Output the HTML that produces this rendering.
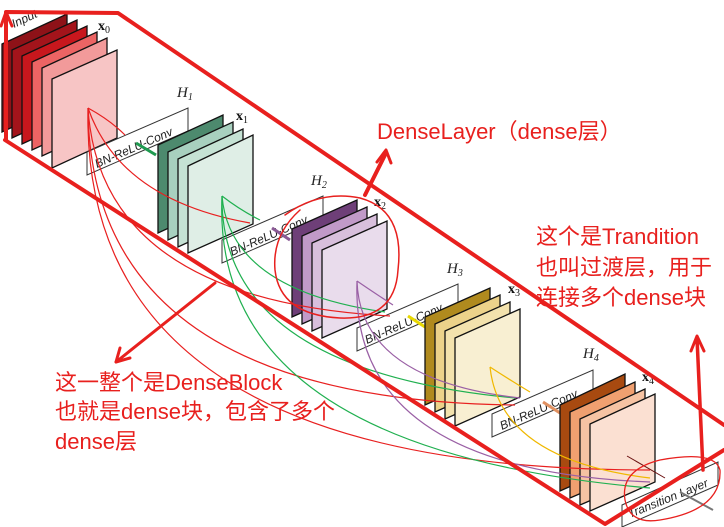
<!DOCTYPE html>
<html><head><meta charset="utf-8"><style>
html,body{margin:0;padding:0;background:#fff;}
svg{display:block;}
.bn{font-family:"Liberation Sans",sans-serif;font-style:italic;font-size:12px;fill:#222;}
.h{font-family:"Liberation Serif",serif;font-style:italic;font-size:15px;fill:#222;}
.x{font-family:"Liberation Serif",serif;font-weight:bold;font-size:14px;fill:#111;}
.cn{font-family:"Liberation Sans","Noto Sans CJK SC",sans-serif;font-size:22px;fill:#e8201e;}
</style></head><body>
<svg width="724" height="527" viewBox="0 0 724 527" xmlns="http://www.w3.org/2000/svg">
<defs>
<g id="box"><polygon points="0,24 101,-20 101,3 0,47" fill="#fff" stroke="#333" stroke-width="1"/></g>
</defs>

<g stroke="#111" stroke-width="1.3">
<polygon points="2,44 67,14 67,102 2,132" fill="#8e1218"/>
<polygon points="12,50 77,20 77,108 12,138" fill="#a3141b"/>
<polygon points="22,56 87,26 87,114 22,144" fill="#c8171d"/>
<polygon points="32,62 97,32 97,120 32,150" fill="#ec6464"/>
<polygon points="42,68 107,38 107,126 42,156" fill="#f29a9a"/>
<polygon points="52,79 117,50 117,138 52,168" fill="#f7c5c5"/>
</g>
<text x="14" y="28" class="bn" transform="rotate(-25 14 28)">Input</text>
<text x="98" y="30" class="x">x<tspan font-size="10" dy="3" font-weight="normal">0</tspan></text>

<g transform="translate(87,128)"><use href="#box"/></g>
<text x="97" y="168" class="bn" transform="rotate(-23.5 97 168)">BN-ReLU-Conv</text>
<text x="177" y="97" class="h">H<tspan font-size="10" dy="3">1</tspan></text>
<line x1="136" y1="143" x2="156" y2="155" stroke="#1f9a50" stroke-width="3"/>

<g stroke="#111" stroke-width="1.3">
<polygon points="158,145 223,115 223,203 158,233" fill="#4d8a6e"/>
<polygon points="168,152 233,122 233,210 168,240" fill="#a8d0bf"/>
<polygon points="178,159 243,129 243,217 178,247" fill="#c5e2d4"/>
<polygon points="188,166 253,135 253,224 188,253" fill="#dfeee6"/>
</g>
<text x="236" y="120" class="x">x<tspan font-size="10" dy="3" font-weight="normal">1</tspan></text>

<g transform="translate(222,216)"><use href="#box"/></g>
<text x="232" y="256" class="bn" transform="rotate(-23.5 232 256)">BN-ReLU-Conv</text>
<text x="311" y="185" class="h">H<tspan font-size="10" dy="3">2</tspan></text>
<line x1="272" y1="228" x2="290" y2="240" stroke="#8a5a95" stroke-width="3"/>

<g stroke="#111" stroke-width="1.3">
<polygon points="292,229 357,200 357,288 292,317" fill="#6e3f78"/>
<polygon points="302,236 367,207 367,295 302,324" fill="#c19ac8"/>
<polygon points="312,243 377,214 377,302 312,331" fill="#d8bfdc"/>
<polygon points="322,250 387,221 387,309 322,338" fill="#e9dcec"/>
</g>
<text x="374" y="206" class="x">x<tspan font-size="10" dy="3" font-weight="normal">2</tspan></text>

<g transform="translate(357,304)"><use href="#box"/></g>
<text x="367" y="344" class="bn" transform="rotate(-23.5 367 344)">BN-ReLU-Conv</text>
<text x="447" y="273" class="h">H<tspan font-size="10" dy="3">3</tspan></text>
<line x1="408" y1="316" x2="425" y2="327" stroke="#e8d800" stroke-width="3"/>

<g stroke="#111" stroke-width="1.3">
<polygon points="425,317 490,288 490,376 425,405" fill="#b08a1e"/>
<polygon points="435,324 500,295 500,383 435,412" fill="#ecd28a"/>
<polygon points="445,331 510,302 510,390 445,419" fill="#f3e2ad"/>
<polygon points="455,338 520,309 520,397 455,426" fill="#f8efd2"/>
</g>
<text x="508" y="293" class="x">x<tspan font-size="10" dy="3" font-weight="normal">3</tspan></text>

<g transform="translate(492,390)"><use href="#box"/></g>
<text x="502" y="430" class="bn" transform="rotate(-23.5 502 430)">BN-ReLU-Conv</text>
<text x="583" y="358" class="h">H<tspan font-size="10" dy="3">4</tspan></text>
<line x1="543" y1="402" x2="560" y2="413" stroke="#e09060" stroke-width="3"/>

<g stroke="#111" stroke-width="1.3">
<polygon points="560,405 625,374 625,462 560,491 " fill="#a84a10"/>
<polygon points="570,412 635,382 635,470 570,498" fill="#f0a070"/>
<polygon points="580,419 645,389 645,477 580,505" fill="#f6c3a3"/>
<polygon points="590,424 655,394 655,482 590,511" fill="#fbe0d2"/>
</g>
<text x="642" y="381" class="x">x<tspan font-size="10" dy="3" font-weight="normal">4</tspan></text>
<line x1="627" y1="456" x2="665" y2="478" stroke="#6a1010" stroke-width="1"/>

<g fill="none" stroke-width="1.2">
<path d="M88,108 Q110,120 125,135" stroke="#e82020"/>
<path d="M88,108 Q120,200 250,223" stroke="#e82020"/>
<path d="M88,108 Q100,300 390,316" stroke="#e82020"/>
<path d="M88,108 Q90,400 515,405" stroke="#e82020"/>
<path d="M88,108 Q80,470 650,470" stroke="#e82020"/>
<path d="M222,196 Q240,210 260,220" stroke="#20b050"/>
<path d="M222,196 Q230,290 385,312" stroke="#20b050"/>
<path d="M222,196 Q220,370 515,398" stroke="#20b050"/>
<path d="M222,196 Q210,450 650,488" stroke="#20b050"/>
<path d="M357,281 Q370,290 393,305" stroke="#9a60a5"/>
<path d="M357,281 Q360,380 520,398" stroke="#9a60a5"/>
<path d="M357,281 Q350,470 650,482" stroke="#9a60a5"/>
<path d="M490,367 Q510,380 530,392" stroke="#f0b800"/>
<path d="M490,367 Q500,460 650,478" stroke="#f0b800"/>
</g>

<polygon points="622,505 718,462 718,485 622,527" fill="#fff" stroke="#333"/>
<text x="630" y="518" class="bn" transform="rotate(-22 630 518)">Transition Layer</text>
<line x1="680" y1="492" x2="713" y2="510" stroke="#777" stroke-width="2"/>

<g fill="none" stroke="#e8201e" stroke-linecap="round" stroke-linejoin="round">
<polyline points="6,140 6,12 118,13 724,425" stroke-width="4"/>
<polyline points="5,140 605,524 724,450" stroke-width="4"/>
<path d="M6,12 L1,26 M6,12 L12,26" stroke-width="3"/>
<path d="M285,215 Q320,190 360,198 Q405,210 398,270 Q395,320 340,318 Q280,315 275,270 Q272,235 300,210" stroke-width="1.5"/>
<path d="M365,195 L385,155" stroke-width="4"/>
<path d="M377,162 L386,150 L391,163" stroke-width="3"/>
<path d="M215,283 L116,362" stroke-width="3"/>
<path d="M116,362 L120,348 M116,362 L130,358" stroke-width="3"/>
<path d="M703,470 L697,338" stroke-width="3.5"/>
<path d="M691,351 L697,336 L704,351" stroke-width="3"/>
<path d="M625,500 Q620,470 660,460 Q715,450 720,470 Q722,510 660,520 Q630,525 625,500" stroke-width="1.3"/>
</g>
<text x="377" y="139" class="cn">DenseLayer（dense层）</text>
<text x="536" y="244" class="cn">这个是Trandition</text>
<text x="536" y="275" class="cn">也叫过渡层，用于</text>
<text x="536" y="305" class="cn">连接多个dense块</text>
<text x="55" y="390" class="cn">这一整个是DenseBlock</text>
<text x="55" y="419" class="cn">也就是dense块，包含了多个</text>
<text x="55" y="449" class="cn">dense层</text>
</svg>
</body></html>
